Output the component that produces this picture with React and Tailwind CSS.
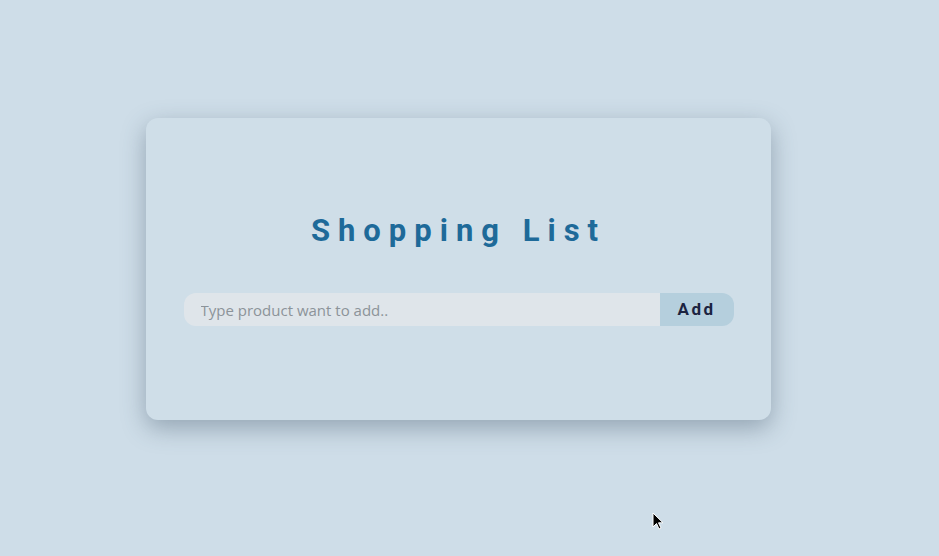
import React from "react";

export default function App() {
  return (
    <div className="relative w-[939px] h-[556px] bg-[#cedde8] overflow-hidden">
      <div className="pt-[118px] pl-[146px]">
        <div className="w-[625px] h-[302px] rounded-[12px] bg-[#cfdee8] shadow-[0_8px_24px_rgba(60,80,100,0.4)] flex flex-col items-center pt-[95px]">
          <h1
            className="h-[36px] leading-[36px] text-[31px] font-bold tracking-[8px] text-[#1e6a99]"
            style={{ fontFamily: "Roboto, 'Liberation Sans', sans-serif" }}
          >
            Shopping List
          </h1>
          <div className="mt-[44px] flex w-[550px] h-[33px]">
            <input
              type="text"
              placeholder="Type product want to add.."
              className="flex-1 h-full rounded-l-[12px] bg-[#dfe5ea] pl-[17px] text-[15px] text-[#333] placeholder:text-[#8c9399] outline-none"
              style={{ fontFamily: "'Open Sans', 'Liberation Sans', sans-serif" }}
            />
            <button
              className="w-[74px] h-full rounded-r-[12px] bg-[#b5cfdd] text-[#1b2340] text-[17px] font-bold tracking-[2.5px]"
              style={{ fontFamily: "Roboto, 'Liberation Sans', sans-serif" }}
            >
              Add
            </button>
          </div>
        </div>
      </div>
      <svg
        className="absolute left-[652px] top-[512px]"
        width="12"
        height="19"
        viewBox="0 0 12 19"
      >
        <path
          d="M1 1 L1 15 L4.5 11.5 L7 17 L9 16 L6.5 10.8 L11 10.8 Z"
          fill="#000"
          stroke="#fff"
          strokeWidth="1"
          strokeLinejoin="round"
        />
      </svg>
    </div>
  );
}
